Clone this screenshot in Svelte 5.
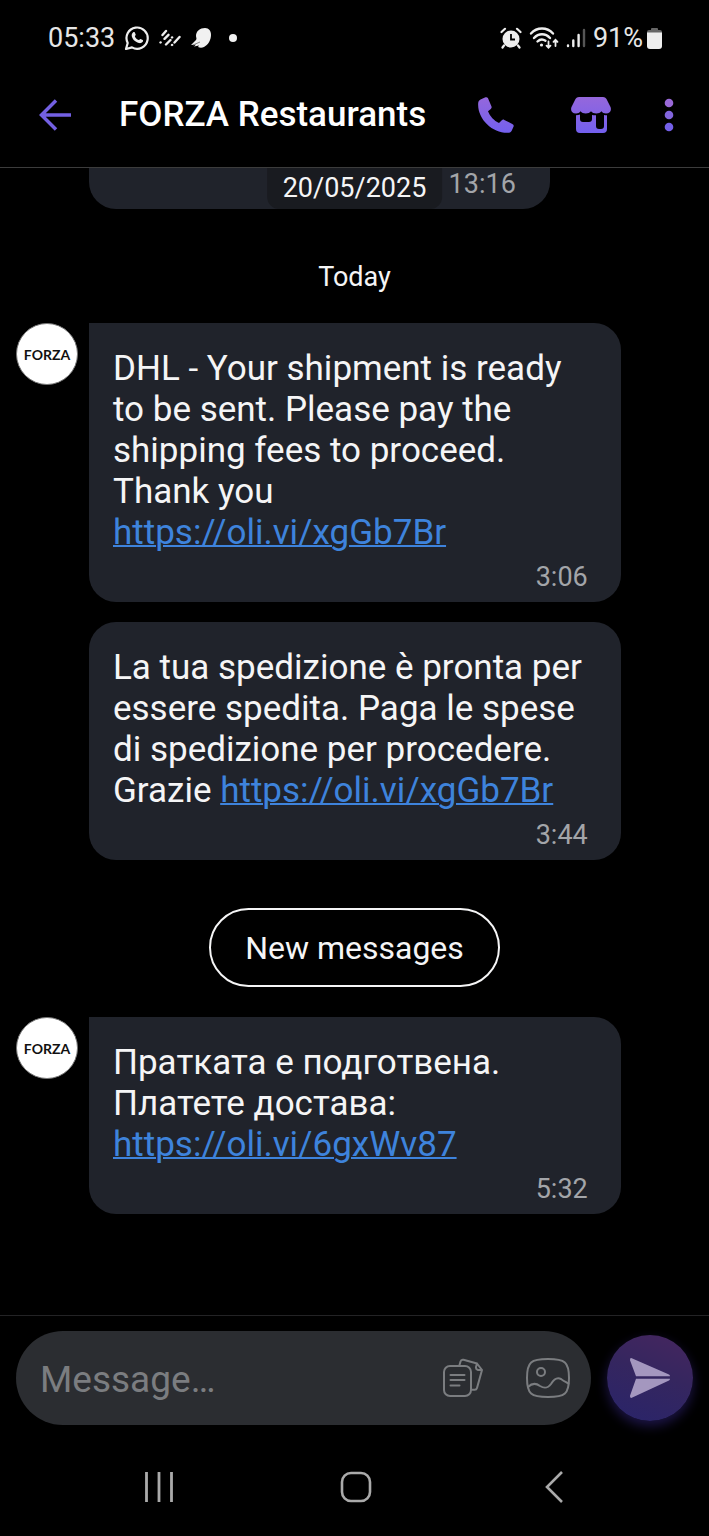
<script lang="ts">
  type Message = { text: string; link: string; breakBefore: boolean; time: string; avatar: boolean };

  const earlier: Message[] = [
    {
      text: 'DHL - Your shipment is ready to be sent. Please pay the shipping fees to proceed. Thank you',
      link: 'https://oli.vi/xgGb7Br',
      breakBefore: true,
      time: '3:06',
      avatar: true,
    },
    {
      text: 'La tua spedizione è pronta per essere spedita. Paga le spese di spedizione per procedere. Grazie',
      link: 'https://oli.vi/xgGb7Br',
      breakBefore: false,
      time: '3:44',
      avatar: false,
    },
  ];

  const unread: Message[] = [
    {
      text: 'Пратката е подготвена. Платете достава:',
      link: 'https://oli.vi/6gxWv87',
      breakBefore: true,
      time: '5:32',
      avatar: true,
    },
  ];

  let draft = $state('');
</script>

{#snippet row(message: Message)}
  <div class="row">
    <div class="avatar-slot">
      {#if message.avatar}<div class="avatar">FORZA</div>{/if}
    </div>
    <article class="bubble" class:first={message.avatar}>
      <p>{message.text}{#if message.breakBefore}<br />{:else}{' '}{/if}<a href={message.link}>{message.link}</a></p>
      <time>{message.time}</time>
    </article>
  </div>
{/snippet}

<div class="app">
  <div class="status">
    <div class="status-left">
      <span>05:33</span>
      <svg width="26" height="26" viewBox="0 0 26 26" fill="none">
        <path d="M2 24l1.700-6A10.600 10.600 0 1 1 8 22.400z" stroke="#eee" stroke-width="2.200" stroke-linejoin="round" />
        <path d="M9.200 7.200c.5-.4 1.300-.4 1.600.2l.9 2.100c.2.6-.9 1.500-.8 1.900.8 1.700 2.100 2.900 3.800 3.600.5.100 1.300-1.300 1.900-1.100l2.100 1c.6.300.4 1.300 0 1.900-.8 1.100-2.300 1.600-3.800 1.200-4-1.100-6.700-3.900-7.200-7.200-.1-1.400.5-2.900 1.500-3.600z" fill="#eee" />
      </svg>
      <svg width="22" height="18" viewBox="0 0 22 18" stroke="#eee" stroke-width="2.400" stroke-linecap="round">
        <path d="M3.500 6L7 2M1.500 13.500l.1-.1M5.500 9.800l4-4M7 15.500l4.500-4.500M13 8.500l.1-.1M13 16l.1-.1M15.500 13.500L20.500 8" />
      </svg>
      <svg class="bird" width="22" height="22" viewBox="0 0 22 22">
        <path d="M6 9c0-5 4-8 9-8 4 0 6 3 6 7 0 5-3 10-7 12-2 1-4 1-6 0l1-1.500-5 1 2-2-5 .5L6 13c1-1.500 0-2.500 0-4z" fill="#f1f1f1" />
        <path d="M3 18l7-3" stroke="#888" />
      </svg>
      <i class="dot"></i>
    </div>
    <div class="status-right">
      <svg width="22" height="22" viewBox="0 0 22 22">
        <circle cx="11" cy="12" r="8.500" fill="#eee" />
        <path d="M1.500 5L5 1.800M20.500 5L17 1.800M4 18.500L2.500 20.500M18 18.500l1.500 2" stroke="#eee" stroke-width="2.200" stroke-linecap="round" />
        <path d="M11 7v5.500h4" fill="none" stroke="#000" stroke-width="1.800" />
      </svg>
      <svg width="30" height="22" viewBox="0 0 30 22" fill="none" stroke="#eee" stroke-width="2.400" stroke-linecap="round">
        <path d="M2 6.500C8-.2 18-.2 24 6.500M5 11c4.500-5 11.500-5 16 0M8.500 14.500c2.500-2.500 5.500-2.500 8-.8" />
        <circle cx="12.500" cy="18" r="1.600" fill="#eee" stroke="none" />
        <path d="M19.500 14.500v6M17.500 18.700l2 2 2-2M26.500 19v-6M24.500 14.800l2-2 2 2" stroke-width="1.800" />
      </svg>
      <svg width="20" height="20" viewBox="0 0 20 20" stroke-width="2.400" stroke-linecap="round">
        <path d="M2 17.500v.5M7.300 12.500V18M12.600 7v11" stroke="#eee" />
        <path d="M18 2v16" stroke="#555" />
      </svg>
      <span>91%</span>
      <svg class="battery" width="15" height="21" viewBox="0 0 15 21">
        <path d="M0 5V4q0-2 2-2h2V1q0-1 1-1h5q1 0 1 1v1h2q2 0 2 2v1z" fill="#666" />
        <path d="M0 4.500h15V18q0 3-3 3H3q-3 0-3-3z" fill="#eee" />
      </svg>
    </div>
  </div>

  <header class="header">
    <button class="back" aria-label="Back">
      <svg width="33" height="32" viewBox="0 0 33 32" fill="none" stroke="#7360e3" stroke-width="3.500">
        <path d="M17 1.500L2.500 16 17 30.500M2.500 16H32" />
      </svg>
    </button>
    <h1>FORZA Restaurants</h1>
    <button aria-label="Call">
      <svg width="36" height="36" viewBox="0 0 36 36">
        <defs>
          <linearGradient id="violet" x1="0" y1="0" x2="0" y2="36" gradientUnits="userSpaceOnUse">
            <stop offset="0" stop-color="#9567dc" />
            <stop offset="1" stop-color="#7360ee" />
          </linearGradient>
        </defs>
        <path d="M2.500 2.500L7.500.3c1-.4 2 0 2.500 1l3.500 8.200c.4 1 .1 1.800-.7 2.400L10 14.200c2 5 6 9.500 11 11.800l2.800-2.700c.7-.7 1.600-.9 2.500-.4l8 4c1.200.6 1.700 1.600 1.300 2.700l-1.800 4c-.5 1.200-1.500 2-2.800 2.200C15 37-1 22 .2 6c.1-1.500.8-2.800 2.300-3.500z" fill="url(#violet)" />
      </svg>
    </button>
    <button class="shop" aria-label="Shop">
      <svg width="40" height="36" viewBox="0 0 40 36" fill="url(#violet)">
        <path d="M8 0h24c1.500 0 2.700.8 3.500 2l4 8c1.300 3.500-.5 6.500-4.500 6.500-2 0-3.500-.8-4.500-2.200-1.300 1.400-3 2.200-5.200 2.200-2.300 0-4-.8-5.300-2.200-1.300 1.400-3 2.200-5.300 2.200-2.200 0-3.900-.8-5.200-2.200C8.500 15.700 7 16.500 5 16.500 1 16.500-.8 13.500.5 10l4-8C5.300.8 6.500 0 8 0z" />
        <path d="M5 18.300q2.500 0 4-.8V22q0 3 3 3h6q3 0 3-3v-4q2 .5 4 .3V29q0 3 3 3h2q3 0 3-3V18q1 .3 3 .3V32q0 4-4 4H9q-4 0-4-4z" />
      </svg>
    </button>
    <button class="more" aria-label="More options">
      <svg width="10" height="34" viewBox="0 0 10 34">
        <circle cx="5" cy="5" r="4.300" fill="#9a69d8" />
        <circle cx="5" cy="17" r="4.300" fill="#8265dd" />
        <circle cx="5" cy="29" r="4.300" fill="#7460e8" />
      </svg>
    </button>
  </header>

  <main class="chat">
    <div class="cut-off">
      <time>13:16</time>
    </div>
    <div class="floating-date">20/05/2025</div>

    <h2 class="day">Today</h2>
    <div class="group">
      {#each earlier as message}
        {@render row(message)}
      {/each}
    </div>

    <button class="new-messages">New messages</button>
    <div class="group">
      {#each unread as message}
        {@render row(message)}
      {/each}
    </div>
  </main>

  <footer class="composer">
    <div class="field">
      <input type="text" aria-label="Message" placeholder="Message…" bind:value={draft} />
      <button aria-label="Templates">
        <svg width="40" height="40" viewBox="0 0 40 40" fill="none" stroke="#7b7d80" stroke-width="2" stroke-linecap="round" stroke-linejoin="round">
          <rect x="1" y="8" width="27" height="30" rx="6" />
          <path d="M7.500 17h14M7.500 22h14M7.500 27.500h9" />
          <path d="M16.500 7l1-3.500c.4-1.500 1.500-2 3-1.700L34 5.500l5 6.500-5 18c-.4 1.500-1.500 2-3 1.800h-2M34 5.500l-1 3.500c-.3 1.500.4 2.500 2 3h4" />
        </svg>
      </button>
      <button aria-label="Gallery">
        <svg width="44" height="40" viewBox="0 0 44 40" fill="none" stroke="#7b7d80" stroke-width="2">
          <path d="M22 1c17 0 21 3 21 19s-4 19-21 19S1 36 1 20 5 1 22 1z" />
          <circle cx="15" cy="14" r="4" />
          <path d="M2 29c4-4 8-4 12-1 5 3 8 2 11-2 3-5 6-7 10-5 4 3 5 3 8 5" />
        </svg>
      </button>
    </div>
    <button class="send" aria-label="Send">
      <svg width="42" height="42" viewBox="0 0 42 42" fill="#a497bf">
        <path d="M2.800 1.200L40 17.500q1 .6 1 1.800H7L1 3.200Q.8.500 2.800 1.200zM2.800 40.800L40 23.500q1-.6 1-1.800H7L1 38.800q-.2 2.700 1.800 2z" />
      </svg>
    </button>
  </footer>

  <nav class="system-nav">
    <button aria-label="Recents">
      <svg width="30" height="32" viewBox="0 0 30 32" stroke="#aaa" stroke-width="2.800">
        <path d="M2.500 1v30M15 1v30M27.500 1v30" />
      </svg>
    </button>
    <button aria-label="Home">
      <svg width="32" height="32" viewBox="0 0 32 32" fill="none" stroke="#aaa" stroke-width="2.600">
        <rect x="2" y="2" width="28" height="28" rx="9" />
      </svg>
    </button>
    <button aria-label="Back to previous screen">
      <svg width="18" height="32" viewBox="0 0 18 32" fill="none" stroke="#aaa" stroke-width="2.600">
        <path d="M17 1L2 16l15 15" />
      </svg>
    </button>
  </nav>
</div>

<style>
  :global(body) { margin: 0; background: #000; }
  .app { min-height: 100vh; display: flex; flex-direction: column; background: #000; color: #f5f5f6; font-family: Roboto, "Liberation Sans", sans-serif; }
  button { display: flex; align-items: center; justify-content: center; padding: 0; border: 0; background: none; color: inherit; font: inherit; cursor: pointer; }
  svg { display: block; flex: none; }

  .status { box-sizing: border-box; height: 76px; padding: 0 47px 0 48px; display: flex; align-items: center; justify-content: space-between; color: #e6e6e6; font-size: 27px; line-height: 32px; }
  .status-left { display: flex; align-items: center; gap: 9px; }
  .status-right { display: flex; align-items: center; gap: 7px; }
  .dot { width: 8px; height: 8px; margin-left: 8px; border-radius: 50%; background: #f1f1f1; }
  .battery { margin-left: -3px; }

  .header { height: 77px; padding: 0 35px 14px 39px; display: flex; align-items: center; border-bottom: 1px solid #3c3c3c; box-sizing: content-box; height: 77px; }
  h1 { flex: 1; margin: 0 0 0 47px; font-size: 35px; line-height: 40px; font-weight: 500; color: #fff; white-space: nowrap; }
  .shop { margin-left: 57px; }
  .more { margin-left: 53px; }

  .chat { position: relative; flex: 1; display: flex; flex-direction: column; }
  .cut-off { box-sizing: border-box; width: 65%; height: 41px; margin-left: 89px; padding-right: 34px; border-radius: 0 0 27px 27px; background: #20232b; text-align: right; }
  .floating-date { position: absolute; top: 0; left: 50%; height: 41px; padding: 0 16px; border-radius: 0 0 12px 12px; background: #191b20; font-size: 27px; line-height: 41px; transform: translateX(-50%); }
  time { color: #a3a5a9; font-size: 27px; line-height: 32px; }
  .day { margin: 52px 0 30px; text-align: center; font-size: 27px; line-height: 32px; font-weight: 400; }

  .group { display: flex; flex-direction: column; gap: 20px; }
  .row { display: flex; padding-left: 16px; }
  .avatar-slot { flex: none; width: 73px; }
  .avatar { box-sizing: border-box; width: 62px; height: 62px; display: flex; align-items: center; justify-content: center; border: 1px solid #777; border-radius: 50%; background: #fff; color: #111; font-family: Lato, sans-serif; font-size: 14px; font-weight: 700; }
  .bubble { box-sizing: border-box; width: 75vw; padding: 25px 33px 9px 24px; display: flex; flex-direction: column; gap: 8px; border-radius: 27px; background: #20232b; }
  .bubble.first { border-top-left-radius: 0; }
  .bubble p { margin: 0; font-size: 35px; line-height: 41px; }
  .bubble time { align-self: flex-end; }
  .bubble a { color: #3e83dc; text-decoration-thickness: 2px; }
  .new-messages { align-self: center; margin: 48px 0 30px; padding: 20px 34px 18px; border: 2px solid #f5f5f6; border-radius: 40px; font-size: 32px; line-height: 37px; }

  .composer { display: flex; align-items: center; gap: 16px; padding: 15px 16px; border-top: 1px solid #232325; }
  .field { flex: 1; min-width: 0; height: 94px; padding: 0 21px 0 24px; display: flex; align-items: center; gap: 43px; box-sizing: border-box; border-radius: 47px; background: #2b2d31; }
  input { flex: 1; min-width: 0; padding: 4px 0 0; border: 0; outline: 0; background: none; color: #f5f5f6; font: inherit; font-size: 37px; line-height: 44px; }
  input::placeholder { color: #7b7d80; opacity: 1; }
  .send { flex: none; width: 86px; height: 86px; border-radius: 50%; background: linear-gradient(200deg, #46265f, #35265f 45%, #29246a); box-shadow: 0 5px 12px #1d1548; }

  .system-nav { height: 94px; padding: 0 0 2px 4px; display: grid; grid-template-columns: repeat(3, 28%); justify-content: center; }
</style>
